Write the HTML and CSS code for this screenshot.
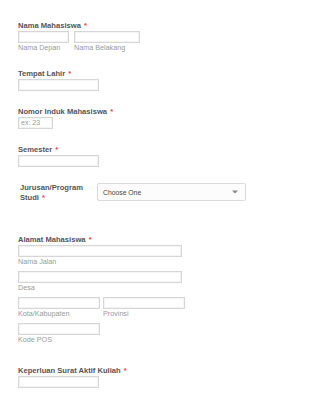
FILE: index.html
```html
<!DOCTYPE html>
<html>
<head>
<meta charset="utf-8">
<link rel="stylesheet" href="styles.css">
</head>
<body>
<form class="form">
  <div class="field f-name">
    <label class="label">Nama Mahasiswa <span class="req">*</span></label>
    <div class="row">
      <div class="col"><div class="input w50"></div><div class="sub">Nama Depan</div></div>
      <div class="col"><div class="input w65"></div><div class="sub">Nama Belakang</div></div>
    </div>
  </div>

  <div class="field">
    <label class="label">Tempat Lahir <span class="req">*</span></label>
    <div class="input w80"></div>
  </div>

  <div class="field">
    <label class="label">Nomor Induk Mahasiswa <span class="req">*</span></label>
    <div class="input w34 ph">ex: 23</div>
  </div>

  <div class="field">
    <label class="label">Semester <span class="req">*</span></label>
    <div class="input w80"></div>
  </div>

  <div class="field side">
    <label class="label side-label">Jurusan/Program Studi <span class="req">*</span></label>
    <div class="select">
      <span>Choose One</span>
      <svg class="caret" width="6" height="4" viewBox="0 0 6 4"><path d="M0 0.5 L6 0.5 L3 3.5 Z" fill="#8a8a8a"/></svg>
    </div>
  </div>

  <div class="field f-addr">
    <label class="label">Alamat Mahasiswa <span class="req">*</span></label>
    <div class="input w163"></div>
    <div class="sub">Nama Jalan</div>
    <div class="input w163 gap"></div>
    <div class="sub">Desa</div>
    <div class="row gap">
      <div class="col"><div class="input w81"></div><div class="sub">Kota/Kabupaten</div></div>
      <div class="col"><div class="input w81"></div><div class="sub">Provinsi</div></div>
    </div>
    <div class="input w81 gap"></div>
    <div class="sub">Kode POS</div>
  </div>

  <div class="field">
    <label class="label">Keperluan Surat Aktif Kuliah <span class="req">*</span></label>
    <div class="input w80"></div>
  </div>
</form>
</body>
</html>
```
FILE: styles.css
```css
html, body {
  margin: 0;
  padding: 0;
  background: #fff;
}
body {
  font-family: "Liberation Sans", Arial, sans-serif;
}
.form {
  padding: 21px 0 0 18px;
}
.field {
  margin-bottom: 16px;
}
.label {
  display: block;
  font-size: 7.6px;
  font-weight: bold;
  color: #555;
  line-height: 10px;
  height: 10px;
}
.req {
  color: #f23a3c;
  margin-left: 1px;
}
.row {
  display: flex;
  gap: 5px;
}
.f-addr .row {
  gap: 3px;
}
.input {
  box-sizing: border-box;
  height: 12px;
  border: 1px solid #d6d6d6;
  background: #fff;
  box-shadow: inset 0 0 0 1px #f4f4f4;
}
.ph {
  font-size: 7px;
  line-height: 10px;
  color: #999;
  padding-left: 2px;
}
.w50 { width: 51px; }
.w65 { width: 66px; }
.w80 { width: 81px; }
.w34 { width: 35px; }
.w163 { width: 164px; }
.w81 { width: 82px; }
.sub {
  font-size: 7.2px;
  color: #999;
  line-height: 10px;
  height: 10px;
}
.gap {
  margin-top: 4px;
}
.side {
  display: flex;
  align-items: flex-start;
  padding-bottom: 16px;
}
.side-label {
  width: 77px;
  height: auto;
  line-height: 10px;
  margin-left: 2px;
  padding-top: 0;
}
.select {
  box-sizing: border-box;
  width: 149px;
  height: 18px;
  border: 1px solid #dadada;
  border-radius: 2px;
  background: #fcfcfc;
  display: flex;
  align-items: center;
  justify-content: space-between;
  padding: 0 7px 0 5px;
  font-size: 6.8px;
  color: #444;
}
.caret {
  display: block;
}
.f-addr {
  margin-bottom: 21px;
}
```
